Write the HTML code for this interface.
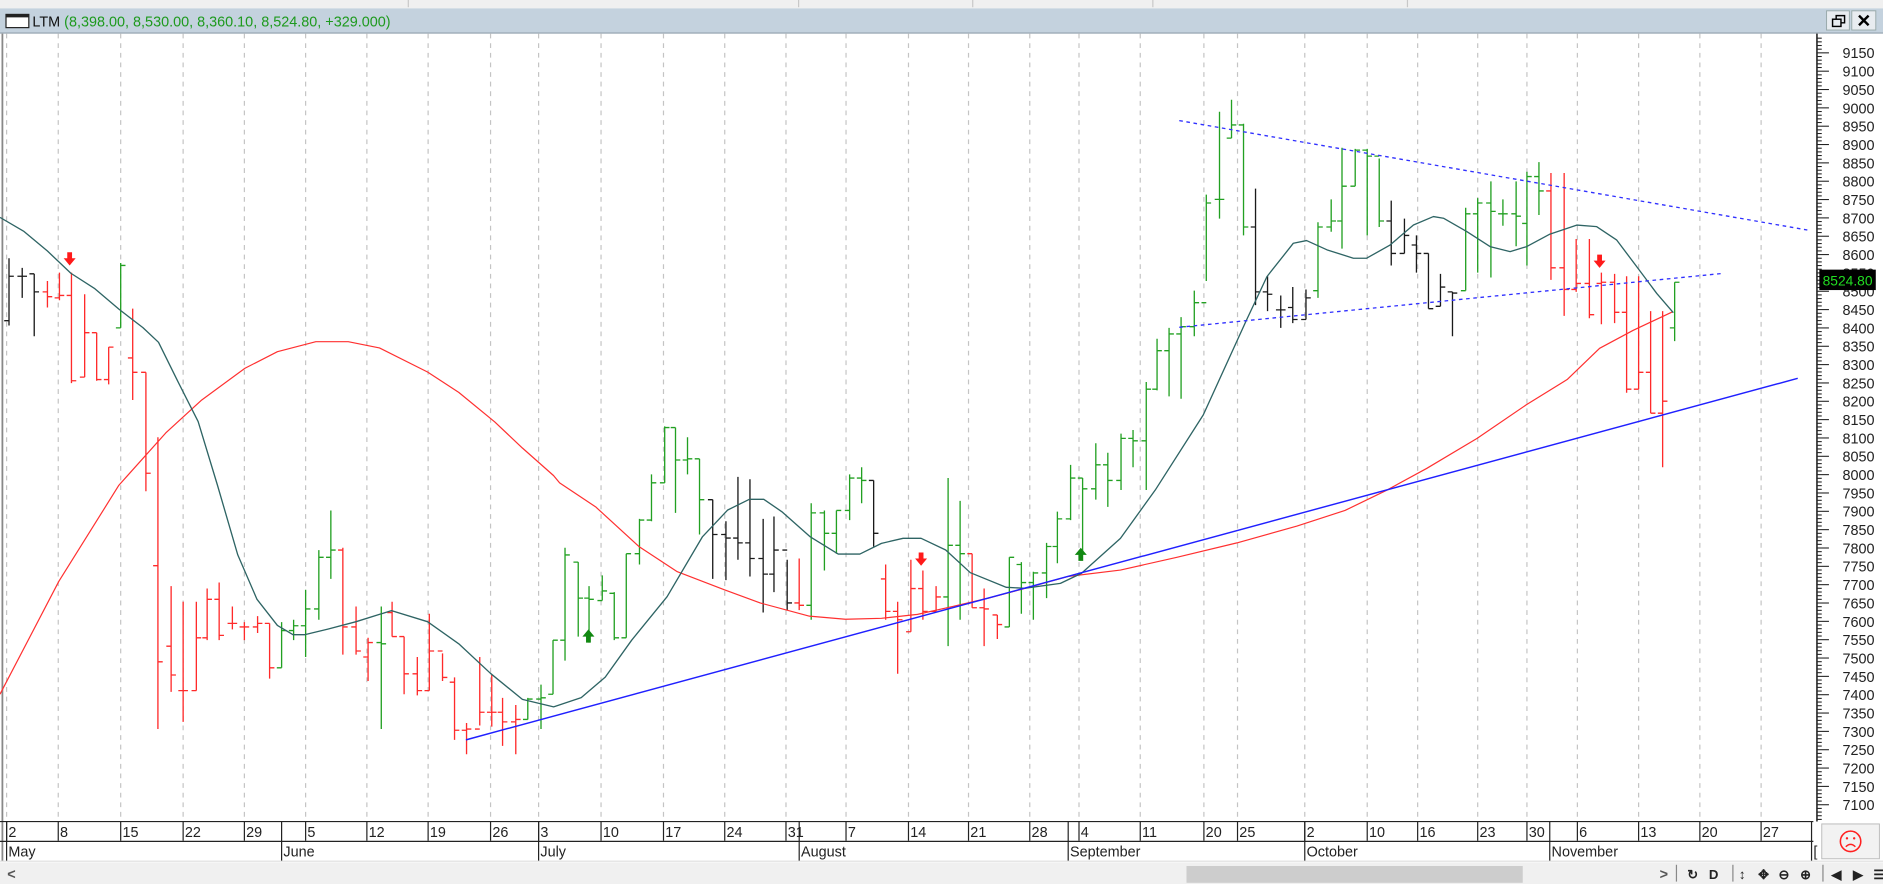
<!DOCTYPE html>
<html><head><meta charset="utf-8"><style>
html,body{margin:0;padding:0;background:#fff;overflow:hidden}
svg{display:block}
text{font-family:"Liberation Sans",Arial,sans-serif}
</style></head><body>
<svg id="s" width="1883" height="884" viewBox="0 0 1568 736" preserveAspectRatio="none" xmlns="http://www.w3.org/2000/svg">
<rect x="0" y="0" width="1568" height="736" fill="#ffffff"/>
<rect x="0" y="0" width="1568" height="7" fill="#f0f0f0"/>
<g stroke="#c8c8c8" stroke-width="1"><line x1="340" y1="0" x2="340" y2="6"/><line x1="665" y1="0" x2="665" y2="6"/><line x1="810" y1="0" x2="810" y2="6"/><line x1="960" y1="0" x2="960" y2="6"/><line x1="1172" y1="0" x2="1172" y2="6"/></g>
<rect x="0" y="7" width="1568" height="21" fill="#c4d2de"/>
<line x1="0" y1="27.5" x2="1568" y2="27.5" stroke="#9aa8b4"/>
<rect x="5" y="12" width="19" height="11" fill="#fff" stroke="#222" stroke-width="1"/>
<line x1="5" y1="13.5" x2="24" y2="13.5" stroke="#222" stroke-width="2"/>
<text x="27" y="22" font-size="12"><tspan fill="#111">LTM</tspan><tspan fill="#1e9a1e"> (8,398.00, 8,530.00, 8,360.10, 8,524.80, +329.000)</tspan></text>
<rect x="1521" y="9" width="19" height="16" fill="#e8ecf0" stroke="#9aa" stroke-width=".8"/>
<rect x="1542" y="9" width="20" height="16" fill="#e8ecf0" stroke="#9aa" stroke-width=".8"/>
<rect x="1526" y="16" width="7" height="6" fill="none" stroke="#000" stroke-width="1.2"/>
<path d="M1529 16V13h7v6h-3" fill="none" stroke="#000" stroke-width="1.2"/>
<path d="M1548 13l8 8M1556 13l-8 8" stroke="#000" stroke-width="2"/>
<line x1="2" y1="28" x2="2" y2="717" stroke="#888" stroke-width="1.5"/>
<g id="grid"></g>
<g id="axis"></g>
<g id="bars"></g>
<g id="lines"></g>
<rect x="1515" y="224.5" width="47" height="17" fill="#000"/>
<text x="1538.5" y="237.5" font-size="11.5" fill="#22dd22" text-anchor="middle">8524.80</text>
<rect x="1517" y="686" width="48" height="29" fill="#f2f2f2" stroke="#bbb" stroke-width=".8"/>
<circle cx="1541" cy="700.5" r="8.5" fill="none" stroke="#ff2020" stroke-width="1.3"/>
<circle cx="1538" cy="698" r="1" fill="#ff2020"/><circle cx="1544" cy="698" r="1" fill="#ff2020"/>
<path d="M1537 705q4 -4 8 0" fill="none" stroke="#ff2020" stroke-width="1.2"/>
<rect x="0" y="718" width="1568" height="18" fill="#f0f0f0"/>
<rect x="988" y="721" width="280" height="14" fill="#cdcdcd"/>
<text x="6" y="732" font-size="12" fill="#555" font-weight="bold">&lt;</text>
<text x="1382" y="732" font-size="12" fill="#555" font-weight="bold">&gt;</text>
<g stroke="#888"><line x1="1396" y1="720" x2="1396" y2="734"/><line x1="1443" y1="720" x2="1443" y2="734"/><line x1="1518" y1="720" x2="1518" y2="734"/></g>
<g font-size="11" fill="#222" font-weight="bold"><text x="1405" y="732">↻</text><text x="1423" y="732" font-family="Liberation Serif">D</text><text x="1448" y="732">↕</text><text x="1464" y="732">✥</text><text x="1481" y="732">⊖</text><text x="1499" y="732">⊕</text><text x="1525" y="732">◀</text><text x="1543" y="732">▶</text><text x="1560" y="732">☰</text></g>
</svg>
<script>
var NS="http://www.w3.org/2000/svg";
function el(p,t,a,txt){var e=document.createElementNS(NS,t);for(var k in a)e.setAttribute(k,a[k]);if(txt!=null)e.textContent=txt;document.getElementById(p).appendChild(e);return e;}
function Y(p){return 44+(9150-p)*0.30537;}
var ticks=[[5,"2"],[48,"8"],[100,"15"],[152,"22"],[203,"29"],[254,"5"],[305,"12"],[356,"19"],[408,"26"],[448,"3"],[500,"10"],[552,"17"],[603,"24"],[654,"31"],[704,"7"],[756,"14"],[806,"21"],[857,"28"],[898,"4"],[949,"11"],[1002,"20"],[1030,"25"],[1086,"2"],[1138,"10"],[1180,"16"],[1230,"23"],[1271,"30"],[1313,"6"],[1364,"13"],[1415,"20"],[1466,"27"]];
var months=[[5,"May"],[234,"June"],[448,"July"],[665,"August"],[889,"September"],[1086,"October"],[1290,"November"],[1508,"D"]];
ticks.forEach(function(t){el("grid","line",{x1:t[0]+.5,y1:28,x2:t[0]+.5,y2:684,stroke:"#c4c4c4","stroke-dasharray":"4,4"});
el("axis","line",{x1:t[0]+.5,y1:684,x2:t[0]+.5,y2:700,stroke:"#222"});el("axis","text",{x:t[0]+2,y:697,"font-size":"12",fill:"#222"},t[1]);});
months.forEach(function(m){el("axis","line",{x1:m[0]+.5,y1:684,x2:m[0]+.5,y2:717,stroke:"#222"});el("axis","text",{x:m[0]+2,y:713,"font-size":"12",fill:"#222"},m[1]=="D"?"[":m[1]);});
el("axis","line",{x1:0,y1:684,x2:1510,y2:684,stroke:"#222"});
el("axis","line",{x1:0,y1:700.5,x2:1510,y2:700.5,stroke:"#222"});
el("axis","line",{x1:0,y1:717,x2:1568,y2:717,stroke:"#ddd"});
el("axis","line",{x1:1513,y1:28,x2:1513,y2:684,stroke:"#222","stroke-width":1.3});
for(var p=7060;p<=9190;p+=10){var y=Y(p);if(y<30||y>683)continue;var maj=p%50==0;el("axis","line",{x1:1513,y1:y,x2:1513+(maj?10:4),y2:y,stroke:"#222","stroke-width":.9});
if(maj)el("axis","text",{x:1561,y:y+4.5,"font-size":"12",fill:"#222","text-anchor":"end"},String(p));}
var C={r:"#ff2a2a",g:"#22a022",k:"#1a1a1a"};
var B=[
[7,215,271,267,230,"k"],[17.5,223,248,230,230,"k"],[28,228,280,228,243,"k"],[38.5,234,256,243,247,"r"],[49.4,227,250,248,246,"r"],[59.3,227,319,246,317,"r"],[69.8,245,314,314,277,"r"],[79.7,277,317,277,316,"r"],[89.6,289,320,316,289,"r"],[100,219,273,273,221,"g"],
[110,257,333,298,310,"r"],[120.6,310,409,310,394,"r"],[131.1,364,607,471,551,"r"],[141.6,488,576,538,562,"r"],[152.2,501,601,575,575,"r"],[162.7,501,575,575,531,"r"],[172,490,533,531,499,"r"],[182.2,485,533,499,529,"r"],[192.7,505,524,519,519,"r"],[203.2,518,533,522,522,"r"],
[213.5,513,527,522,519,"r"],[224,519,565,519,556,"r"],[233.9,518,556,556,525,"g"],[243.8,516,533,525,521,"g"],[254,491,547,521,507,"g"],[264.5,458,516,507,464,"g"],[274.7,425,482,464,458,"g"],[285.3,456,545,458,522,"r"],[295.8,505,545,522,542,"r"],[306.3,531,567,547,535,"r"],
[316.9,505,607,535,536,"g"],[326.1,501,530,510,530,"r"],[336,530,578,530,561,"r"],[346.5,547,579,561,575,"r"],[357.1,511,575,575,542,"r"],[367.6,544,567,542,564,"r"],[377.5,564,616,568,608,"r"],[388,602,628,608,607,"r"],[398.6,547,604,607,593,"r"],[408.5,562,605,593,593,"r"],
[418.3,581,621,593,601,"r"],[428.9,587,628,601,599,"r"],[439.4,581,599,599,582,"g"],[449.6,570,607,582,581,"g"],[459.8,533,578,578,533,"g"],[470.4,456,550,533,462,"g"],[480.6,468,530,468,498,"g"],[490.1,488,535,498,499,"g"],[500.5,479,500,500,492,"g"],[510.9,493,533,494,531,"g"],
[521.3,461,531,531,461,"g"],[531.7,432,470,461,433,"g"],[542.1,395,434,433,402,"g"],[552.5,355,402,402,356,"g"],[562.1,356,427,356,383,"g"],[571.9,364,395,383,382,"g"],[582.3,382,445,382,416,"g"],[593.3,416,482,416,445,"k"],[603.7,434,483,445,448,"k"],[614.1,397,466,448,452,"k"],
[623.9,399,480,452,465,"k"],[634.9,432,510,465,478,"k"],[644.1,430,493,478,458,"k"],[654.6,466,508,458,502,"k"],[665,465,508,502,504,"r"],[675.4,419,516,504,427,"g"],[685.8,425,475,427,444,"g"],[696.2,425,461,444,425,"g"],[706.6,395,433,425,398,"g"],[717,389,419,398,400,"g"],
[726.5,400,455,400,444,"k"],[737,470,516,482,509,"r"],[747.4,501,561,509,516,"r"],[757.8,466,526,526,490,"r"],[768.2,475,516,490,509,"r"],[778.6,488,509,509,497,"r"],[789,398,538,497,454,"g"],[799.4,417,516,454,461,"g"],[808.9,461,506,461,506,"r"],[818.7,490,538,506,507,"r"],
[829.7,512,532,512,520,"r"],[839.6,464,522,522,464,"g"],[850,468,511,470,485,"g"],[860.4,476,516,485,477,"g"],[870.8,452,498,477,455,"g"],[880.3,426,469,455,432,"g"],[891,387,433,432,398,"g"],[901.1,398,461,398,407,"g"],[911.8,369,416,407,387,"g"],[921.9,377,422,387,400,"g"],
[932.7,361,408,400,365,"g"],[943,358,389,365,367,"g"],[953.5,318,408,367,324,"g"],[963.2,282,325,324,292,"g"],[972.9,273,330,292,278,"g"],[983.2,264,332,278,272,"g"],[994.3,242,280,272,252,"g"],[1004.3,162,234,252,169,"g"],[1014.6,93,182,166,166,"g"],[1025.1,83,115,115,104,"g"],
[1035.4,103,196,104,189,"g"],[1045.1,157,254,189,243,"k"],[1055.4,230,259,243,245,"k"],[1065.9,246,273,258,258,"k"],[1076.2,239,269,256,266,"k"],[1086.7,241,266,266,248,"k"],[1097,185,248,242,189,"g"],[1107.6,166,193,189,184,"g"],[1117.3,123,207,184,155,"g"],[1127.5,124,155,155,125,"g"],
[1137.5,124,196,125,130,"g"],[1147.8,132,189,130,184,"g"],[1158.1,167,221,184,211,"k"],[1168.6,182,211,211,196,"k"],[1179.2,196,227,204,211,"k"],[1189.4,211,257,211,257,"k"],[1199.2,228,255,255,239,"k"],[1209.4,243,280,243,244,"k"],[1220,173,242,242,178,"g"],[1230.3,165,227,178,169,"g"],
[1240.8,151,231,169,176,"g"],[1251.3,166,188,178,178,"g"],[1261.6,151,205,178,180,"g"],[1271.3,143,221,186,147,"g"],[1281,135,179,147,159,"g"],[1291.3,144,233,159,223,"r"],[1301.8,144,263,223,241,"r"],[1312.4,199,243,241,236,"r"],[1322.7,199,265,236,262,"r"],[1333,227,270,236,235,"r"],
[1343.5,228,269,235,260,"r"],[1354,230,327,260,324,"r"],[1363.5,230,324,324,310,"r"],[1374,259,344,310,344,"r"],[1384.3,259,389,344,334,"r"],[1394,235,284,273,235,"g"]];
B.forEach(function(b){var x=Math.round(b[0])+.5,c=C[b[5]];
el("bars","path",{d:"M"+x+" "+b[1]+"V"+b[2]+"M"+(x-4)+" "+b[3]+"H"+x+"M"+x+" "+b[4]+"H"+(x+4),stroke:c,fill:"none","stroke-width":1.1});});
function pl(pts,col,w,dash){var d="M"+pts.map(function(p){return p[0]+" "+p[1];}).join(" L");var a={d:d,stroke:col,fill:"none","stroke-width":w,"stroke-linejoin":"round"};if(dash)a["stroke-dasharray"]=dash;el("lines","path",a);}
pl([[0,578],[49,484],[99,404],[138,360.5],[168,333],[204,306.6],[231,292.8],[263,284.5],[290,284.5],[316,289.7],[356,309.7],[382,326.7],[412,351.3],[435,373],[461,396],[466,402],[496,422],[532,455],[564,476],[603,491],[633,502],[674,513],[704,515.6],[734,514.8],[764,511.5],[793,505],[823,498],[853,490],[889,480],[933,474.6],[980,464],[1030,452],[1080,438],[1120,425],[1155,408],[1188,390],[1230,365],[1271,337],[1305,316],[1332,290],[1360,275],[1393,259.5]],"#ff3030",1);
pl([[0,181],[20,192.7],[39.5,209],[59,227.5],[79,240.4],[99,257.4],[119,272.8],[132,285],[148,317.4],[165,351],[181,403.7],[198,462],[214,499],[231,520.7],[244,528.4],[254,528.4],[273,523.8],[296.5,517.6],[326,508.4],[356,517.6],[382,536],[408.5,560.7],[435,582.3],[461,588.5],[484,580.8],[504,563.8],[526,533],[555.5,496.8],[585,446.8],[606,424.6],[624,415.7],[636,415.7],[651,426],[674.5,446.8],[698,461.3],[716,461.3],[734,452.4],[752,448.2],[767,448.2],[787.5,457.9],[808,476.8],[838,489],[853,489.8],[883,485.7],[900.5,477.4],[933,448.2],[962,408],[1002,345.4],[1038,266.4],[1055,230.3],[1077,202.5],[1088,200.3],[1105,208],[1127,215],[1138,215],[1157.5,204],[1177,187.3],[1193.6,180.3],[1202,181.7],[1221.4,192.8],[1240.8,205.3],[1257.5,209.5],[1271.3,205.3],[1290.7,194.9],[1313,187.4],[1329.6,188.7],[1346.3,199.9],[1362.9,222],[1379.6,244.3],[1393.4,260.3]],"#2e6464",1.1);
pl([[388,616],[1497,315]],"#2020ff",1.2);
pl([[982,100.4],[1505,191.5]],"#3030ff",1.1,"3,3");
pl([[982,272.5],[1435,227.6]],"#3030ff",1.1,"3,3");
function arrow(x,y,dn,col){var d=dn?"M"+(x-2)+" "+(y-6)+"h4v5h3l-5 6l-5 -6h3z":"M"+(x-2)+" "+(y+6)+"h4v-5h3l-5 -6l-5 6h3z";el("lines","path",{d:d,fill:col,stroke:"none"});}
arrow(58,216,true,"#ff1a1a");arrow(767,466,true,"#ff1a1a");arrow(1332,218,true,"#ff1a1a");
arrow(490,529,false,"#118811");arrow(900,461,false,"#118811");
var s=document.getElementById("s");
</script>
</body></html>
